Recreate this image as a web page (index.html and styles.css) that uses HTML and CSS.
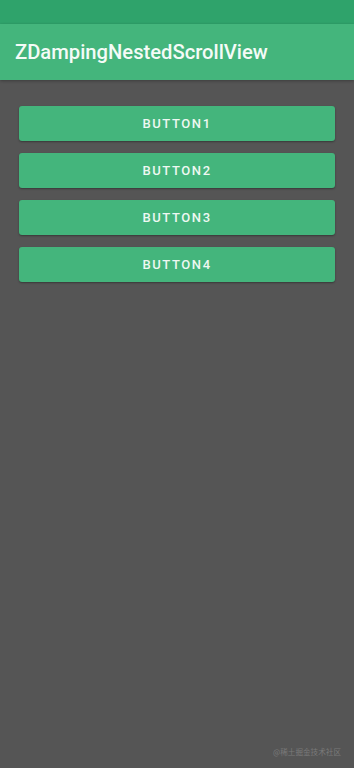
FILE: index.html
```html
<!DOCTYPE html>
<html>
<head>
<meta charset="utf-8">
<link rel="stylesheet" href="styles.css">
</head>
<body>
<div class="screen">
  <div class="status-bar"></div>
  <div class="toolbar"><span class="title">ZDampingNestedScrollView</span></div>
  <div class="content">
    <button class="btn">BUTTON1</button>
    <button class="btn">BUTTON2</button>
    <button class="btn">BUTTON3</button>
    <button class="btn">BUTTON4</button>
  </div>
  <div class="watermark">@稀土掘金技术社区</div>
</div>
</body>
</html>
```
FILE: styles.css
```css
html, body {
  margin: 0;
  padding: 0;
}
body {
  background: #555555;
  font-family: Roboto, "Noto Sans", sans-serif;
}
.screen {
  width: 354px;
  height: 768px;
  display: flex;
  flex-direction: column;
  position: relative;
  background: #555555;
}
.status-bar {
  height: 24px;
  background: #2fa36b;
}
.toolbar {
  height: 56px;
  background: #44b57c;
  display: flex;
  align-items: center;
  padding-left: 15px;
  box-shadow: 0 1px 3px rgba(0,0,0,0.3);
}
.title {
  color: #f4fbf7;
  font-size: 20.2px;
  font-weight: 500;
}
.content {
  display: flex;
  flex-direction: column;
  gap: 12px;
  padding: 26px 19px 0 19px;
}
.btn {
  height: 35px;
  border: none;
  border-radius: 3px;
  background: #44b57c;
  color: #eef8f2;
  font-family: Roboto, sans-serif;
  font-weight: 500;
  font-size: 13px;
  letter-spacing: 1.6px;
  box-shadow: 0 1px 2px rgba(0,0,0,0.35);
  padding: 0;
}
.watermark {
  position: absolute;
  right: 13px;
  bottom: 11px;
  font-family: "Noto Sans CJK SC", sans-serif;
  font-size: 7.6px;
  color: #7a7a7a;
}
```
